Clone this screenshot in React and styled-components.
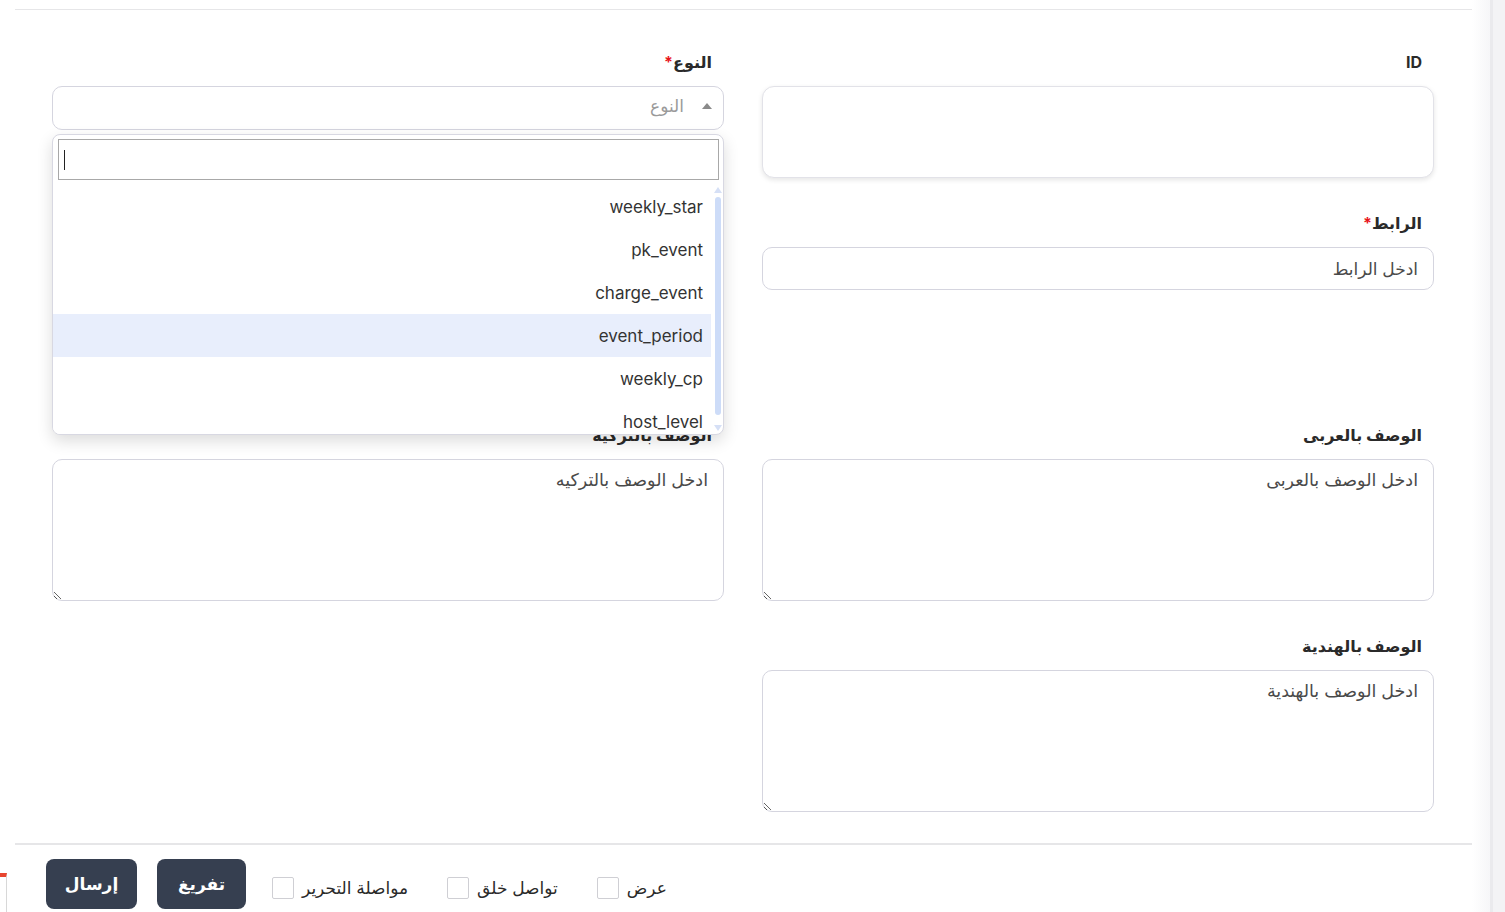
import React from 'react';
import styled, { createGlobalStyle } from 'styled-components';

const GlobalStyle = createGlobalStyle`
  html, body {
    margin: 0;
    padding: 0;
    background: #fff;
    font-family: Inter, "DejaVu Sans", sans-serif;
    color: #2b2b2b;
  }
  * { box-sizing: border-box; }
`;

const options = ['weekly_star', 'pk_event', 'charge_event', 'event_period', 'weekly_cp', 'host_level'];

const App = () => {
  return (
    <>
      <GlobalStyle />
      <Page>
        <EdgeMark />
        <Main>
          <TopRule />
          <Form dir="rtl">
            <Field>
              <Label>ID</Label>
              <IdBox />
            </Field>

            <Field $raised>
              <Label>
                النوع<Star>*</Star>
              </Label>
              <Select>
                <Caret />
                <SelectText>النوع</SelectText>
              </Select>
              <Dropdown>
                <Search>
                  <Cursor />
                </Search>
                <ListWrap>
                  <ScrollBar>
                    <Arrow />
                    <Thumb />
                    <Arrow $down />
                  </ScrollBar>
                  <List>
                    {options.map((o, i) => (
                      <Option key={o} $active={i === 3}>
                        {o}
                      </Option>
                    ))}
                  </List>
                </ListWrap>
              </Dropdown>
            </Field>

            <Field>
              <Label>
                الرابط<Star>*</Star>
              </Label>
              <Input placeholder="ادخل الرابط" />
            </Field>

            <HiddenSlot />

            <Field>
              <Label>الوصف بالعربى</Label>
              <TextArea placeholder="ادخل الوصف بالعربى" />
            </Field>

            <Field>
              <Label>الوصف بالتركيه</Label>
              <TextArea placeholder="ادخل الوصف بالتركيه" />
            </Field>

            <Field>
              <Label>الوصف بالهندية</Label>
              <TextArea placeholder="ادخل الوصف بالهندية" />
            </Field>
          </Form>

          <Footer dir="rtl">
            <Check>
              عرض
              <Box />
            </Check>
            <Check>
              تواصل خلق
              <Box />
            </Check>
            <Check>
              مواصلة التحرير
              <Box />
            </Check>
            <Button $wide>تفريغ</Button>
            <Button>إرسال</Button>
          </Footer>
        </Main>
        <Shade />
        <Track />
      </Page>
    </>
  );
};

const Page = styled.div`
  position: relative;
  display: flex;
  min-height: 912px;
  padding-left: 15px;
`;

const EdgeMark = styled.div`
  position: absolute;
  left: 0;
  top: 873px;
  width: 7px;
  height: 40px;
  border-top: 4px solid #e8452f;
  border-right: 1px solid #d8d8d8;
`;

const Main = styled.div`
  width: 1457px;
  flex-shrink: 0;
`;

const Shade = styled.div`
  width: 18px;
  background: linear-gradient(to right, #ffffff, #f6f6f8);
`;

const Track = styled.div`
  width: 15px;
  background: #f3f3f5;
  border-left: 3px solid #eaeaed;
`;

const TopRule = styled.div`
  height: 10px;
  border-bottom: 1px solid #e6e6e8;
`;

const Form = styled.div`
  display: grid;
  grid-template-columns: 672px 672px;
  column-gap: 38px;
  row-gap: 33px;
  padding: 40px 38px 31px 37px;
`;

const Field = styled.div`
  position: relative;
  display: flex;
  flex-direction: column;
  z-index: ${(p) => (p.$raised ? 5 : 1)};
`;

const HiddenSlot = styled.div`
  height: 179px;
`;

const Label = styled.div`
  font-size: 16px;
  font-weight: 700;
  line-height: 24px;
  color: #2a2a2a;
  padding-right: 12px;
  margin-bottom: 12px;
`;

const Star = styled.span`
  color: #e8141a;
`;

const IdBox = styled.div`
  height: 92px;
  border: 1px solid #e2e2e8;
  border-radius: 12px;
  background: #fff;
  box-shadow: 0 2px 5px rgba(0, 0, 0, 0.1);
`;

const Input = styled.input`
  height: 43px;
  border: 1px solid #d5d5df;
  border-radius: 10px;
  padding: 0 15px;
  font-family: inherit;
  font-size: 17px;
  color: #333;
  outline: none;
  &::placeholder {
    color: #4a4a4a;
  }
`;

const TextArea = styled.textarea`
  height: 142px;
  border: 1px solid #d5d5df;
  border-radius: 10px;
  padding: 7px 15px;
  font-family: inherit;
  font-size: 17.5px;
  line-height: 26px;
  color: #333;
  outline: none;
  resize: vertical;
  &::placeholder {
    color: #4a4a4a;
  }
`;

const Select = styled.div`
  height: 44px;
  border: 1px solid #d5d5df;
  border-radius: 10px;
  display: flex;
  align-items: center;
  gap: 18px;
  padding: 0 11px 5px;
  background: #fff;
`;

const Caret = styled.span`
  width: 0;
  height: 0;
  border-left: 5px solid transparent;
  border-right: 5px solid transparent;
  border-bottom: 6px solid #8a8a8a;
`;

const SelectText = styled.span`
  font-size: 17px;
  color: #9a9a9a;
`;

const Dropdown = styled.div`
  position: absolute;
  top: 84px;
  left: 0;
  right: 0;
  height: 301px;
  background: #fff;
  border: 1px solid #d8d8e2;
  border-radius: 8px;
  box-shadow: 0 6px 16px rgba(0, 0, 0, 0.14);
  overflow: hidden;
  display: flex;
  flex-direction: column;
`;

const Search = styled.div`
  margin: 4px 4px 5px 5px;
  height: 41px;
  border: 1px solid #a8a8a8;
  display: flex;
  align-items: center;
  padding: 0 5px;
  direction: ltr;
`;

const Cursor = styled.span`
  width: 1px;
  height: 20px;
  background: #222;
`;

const ListWrap = styled.div`
  flex: 1;
  display: flex;
  overflow: hidden;
`;

const ScrollBar = styled.div`
  width: 12px;
  flex-shrink: 0;
  display: flex;
  flex-direction: column;
  align-items: center;
  padding: 2px 0 3px 2px;
  gap: 4px;
`;

const Arrow = styled.span`
  width: 0;
  height: 0;
  border-left: 4px solid transparent;
  border-right: 4px solid transparent;
  ${(p) =>
    p.$down ? 'border-top: 6px solid #d6e0f6;' : 'border-bottom: 6px solid #d6e0f6;'}
`;

const Thumb = styled.span`
  width: 6px;
  flex: 1;
  border-radius: 3px;
  background: #cddcf8;
  margin-bottom: 6px;
`;

const List = styled.div`
  flex: 1;
  overflow: hidden;
`;

const Option = styled.div`
  height: 43px;
  display: flex;
  align-items: center;
  padding-right: 8px;
  font-size: 17px;
  color: #333;
  background: ${(p) => (p.$active ? '#e8eefc' : '#fff')};
`;

const Footer = styled.div`
  border-top: 2px solid #e6e6e8;
  display: flex;
  align-items: center;
  justify-content: flex-end;
  padding: 14px 0 0 31px;
  gap: 20px;
`;

const Check = styled.label`
  display: flex;
  align-items: center;
  gap: 8px;
  font-size: 17px;
  color: #2a2a2a;
  margin-left: 19px;
  padding-top: 7px;
  &:nth-child(3) {
    margin-left: 6px;
  }
`;

const Box = styled.span`
  width: 22px;
  height: 22px;
  border: 1px solid #cfcfd4;
  border-radius: 2px;
  background: #fff;
`;

const Button = styled.button`
  height: 50px;
  width: ${(p) => (p.$wide ? '89px' : '91px')};
  border: none;
  border-radius: 8px;
  background: #363f50;
  color: #fff;
  font-family: inherit;
  font-size: 17px;
  font-weight: 700;
  cursor: pointer;
`;

export default App;
